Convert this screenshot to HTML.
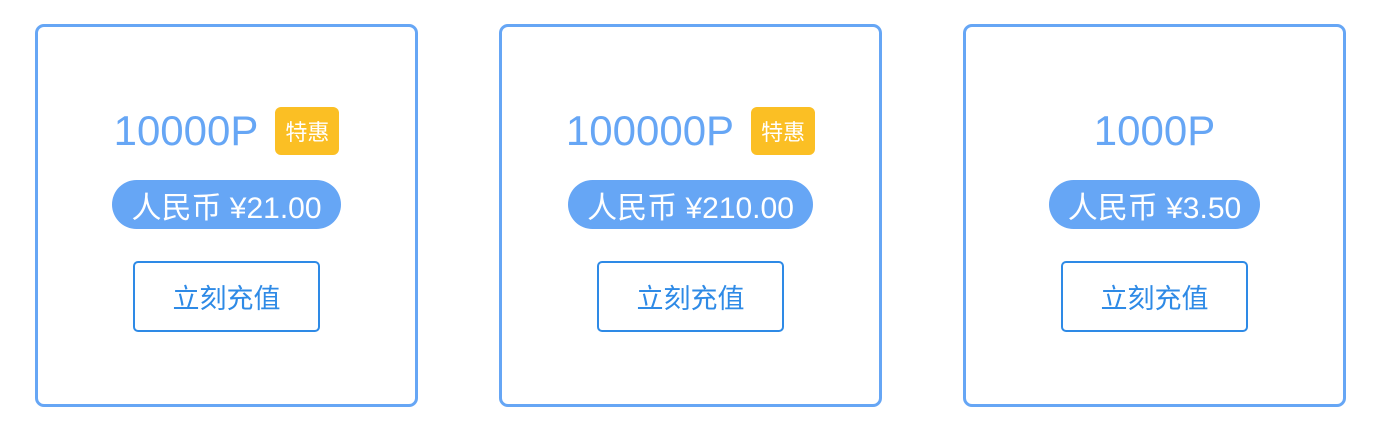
<!DOCTYPE html>
<html><head><meta charset="utf-8"><style>
body{margin:0;width:1390px;height:421px;background:#fff;font-family:"Liberation Sans","Noto Sans CJK SC",sans-serif;position:relative;overflow:hidden}
.card{position:absolute;top:24px;width:377px;height:377px;border:3px solid #66a6f5;border-radius:9px}
.row{position:absolute;left:0;right:0;display:flex;justify-content:center;align-items:center}
.t{top:80px;height:48px;color:#66a6f5;font-size:42px}
.b{margin-left:17px;background:#fbbf24;color:#fff;font-size:22px;border-radius:6px;width:64px;height:48px;display:flex;align-items:center;justify-content:center}
.p{top:153px}
.pill{background:#66a6f5;color:#fff;font-size:30px;height:49px;border-radius:25px;padding:0 19px;display:flex;align-items:center;white-space:pre}
.btnr{top:234px}
.btn{width:183px;height:67px;border:2px solid #2e8ae6;border-radius:5px;color:#2e8ae6;font-size:27px;display:flex;align-items:center;justify-content:center}
</style></head><body>
<div class="card" style="left:35px">
<div class="row t">10000P<span class="b">特惠</span></div>
<div class="row p"><span class="pill">人民币 ¥21.00</span></div>
<div class="row btnr"><span class="btn">立刻充值</span></div>
</div>
<div class="card" style="left:499px">
<div class="row t">100000P<span class="b">特惠</span></div>
<div class="row p"><span class="pill">人民币 ¥210.00</span></div>
<div class="row btnr"><span class="btn">立刻充值</span></div>
</div>
<div class="card" style="left:963px">
<div class="row t">1000P</div>
<div class="row p"><span class="pill">人民币 ¥3.50</span></div>
<div class="row btnr"><span class="btn">立刻充值</span></div>
</div>
</body></html>
